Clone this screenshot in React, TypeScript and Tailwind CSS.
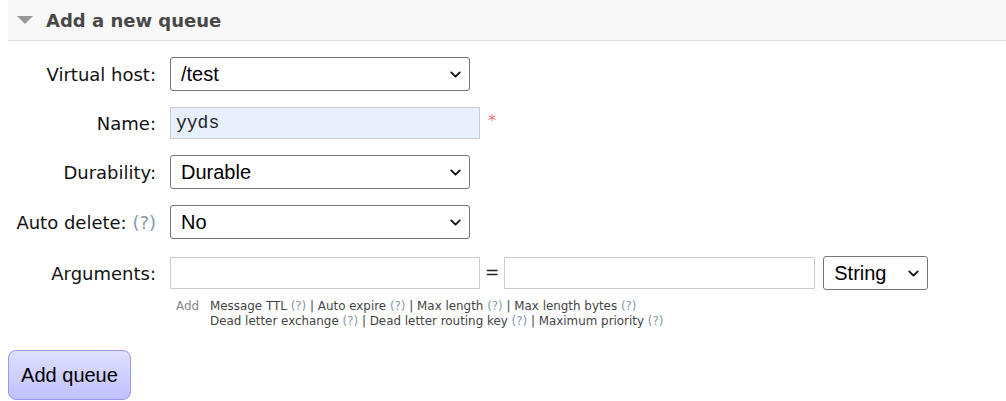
import { ChevronDown } from "lucide-react";

const label = "text-right pr-[14px] text-[18px] text-[#111]";

function Select({ value, w }: { value: string; w: string }) {
  return (
    <div
      className={`${w} h-[34px] flex items-center justify-between pl-[10px] pr-[5px] border border-[#767676] rounded-[3px] bg-white font-['Liberation_Sans',Arial,sans-serif] text-[20px] text-black`}
    >
      <span>{value}</span>
      <ChevronDown size={17} strokeWidth={2.6} className="text-[#111]" />
    </div>
  );
}

function Help() {
  return <span className="text-[#8899aa]">(?)</span>;
}

export default function App() {
  return (
    <div className="w-[1006px] h-[401px] bg-white font-['DejaVu_Sans',Verdana,sans-serif] overflow-hidden">
      <div className="ml-[8px] h-[41px] bg-[#f8f8f8] border-b border-[#dddddd] flex items-center">
        <svg width="16" height="9" viewBox="0 0 16 9" className="ml-[9px] mt-[1px]">
          <polygon points="0,0 16,0 8,8" fill="#999999" />
        </svg>
        <span className="ml-[13px] text-[18px] font-bold text-[#484848]">Add a new queue</span>
      </div>

      <div className="ml-[8px] mt-[16px] grid grid-cols-[162px_1fr] items-center gap-y-[16px]">
        <div className={label}>Virtual host:</div>
        <Select value="/test" w="w-[300px]" />

        <div className={label}>Name:</div>
        <div className="flex items-center">
          <div className="w-[310px] h-[32px] flex items-center pl-[5px] bg-[#e8f0fe] border border-[#cccccc] font-['Liberation_Mono','Courier_New',monospace] text-[18px] text-[#222]">
            yyds
          </div>
          <span className="ml-[8px] mt-[-4px] text-[#ff7777] text-[16px]">*</span>
        </div>

        <div className={label}>Durability:</div>
        <Select value="Durable" w="w-[300px]" />

        <div className={`${label} pr-[13px]`}>
          Auto delete: <Help />
        </div>
        <Select value="No" w="w-[300px]" />

        <div className={`${label} self-start pt-[4px] mt-[1px]`}>Arguments:</div>
        <div className="mt-[1px]">
          <div className="flex items-center">
            <div className="w-[310px] h-[32px] border border-[#cccccc] bg-white" />
            <span className="mx-[5px] text-[17px] text-[#222]">=</span>
            <div className="w-[311px] h-[32px] border border-[#cccccc] bg-white" />
            <div className="ml-[8px]">
              <Select value="String" w="w-[105px]" />
            </div>
          </div>
          <div className="mt-[9px] ml-[6px] flex text-[11.9px] leading-[15px] text-[#444]">
            <span className="text-[#888888] mr-[11px]">Add</span>
            <div>
              <div>
                Message TTL <Help /> | Auto expire <Help /> | Max length <Help /> | Max length bytes <Help />
              </div>
              <div>
                Dead letter exchange <Help /> | Dead letter routing key <Help /> | Maximum priority <Help />
              </div>
            </div>
          </div>
        </div>
      </div>

      <button className="ml-[8px] mt-[21px] w-[123px] h-[50px] rounded-[8px] border border-[#9999ee] bg-gradient-to-b from-[#e0e0ff] to-[#c0c0ff] font-['Liberation_Sans',Arial,sans-serif] text-[20px] text-black">
        Add queue
      </button>
    </div>
  );
}
